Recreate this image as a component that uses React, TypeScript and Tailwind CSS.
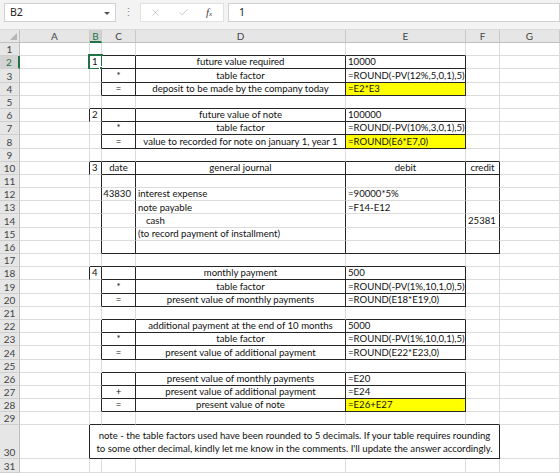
import { X, Check } from "lucide-react";

// column names: row header, A..G
const COLS = ["", "A", "B", "C", "D", "E", "F", "G"];

type Cell = { v: string; a?: "l" | "c" | "r"; y?: boolean; ind?: boolean };

const cells: Record<string, Cell> = {
  B2: { v: "1" },
  D2: { v: "future value required", a: "c" },
  E2: { v: "10000" },
  C3: { v: "*", a: "c" },
  D3: { v: "table factor", a: "c" },
  E3: { v: "=ROUND(-PV(12%,5,0,1),5)" },
  C4: { v: "=", a: "c" },
  D4: { v: "deposit to be made by the company today", a: "c" },
  E4: { v: "=E2*E3", y: true },

  B6: { v: "2" },
  D6: { v: "future value of note", a: "c" },
  E6: { v: "100000" },
  C7: { v: "*", a: "c" },
  D7: { v: "table factor", a: "c" },
  E7: { v: "=ROUND(-PV(10%,3,0,1),5)" },
  C8: { v: "=", a: "c" },
  D8: { v: "value to recorded for note on january 1, year 1", a: "c" },
  E8: { v: "=ROUND(E6*E7,0)", y: true },

  B10: { v: "3" },
  C10: { v: "date", a: "c" },
  D10: { v: "general journal", a: "c" },
  E10: { v: "debit", a: "c" },
  F10: { v: "credit", a: "c" },
  C12: { v: "43830", a: "r" },
  D12: { v: "interest expense" },
  E12: { v: "=90000*5%" },
  D13: { v: "note payable" },
  E13: { v: "=F14-E12" },
  D14: { v: "cash", ind: true },
  F14: { v: "25381" },
  D15: { v: "(to record payment of installment)" },

  B18: { v: "4" },
  D18: { v: "monthly payment", a: "c" },
  E18: { v: "500" },
  C19: { v: "*", a: "c" },
  D19: { v: "table factor", a: "c" },
  E19: { v: "=ROUND(-PV(1%,10,1,0),5)" },
  C20: { v: "=", a: "c" },
  D20: { v: "present value of monthly payments", a: "c" },
  E20: { v: "=ROUND(E18*E19,0)" },

  D22: { v: "additional payment at the end of 10 months", a: "c" },
  E22: { v: "5000" },
  C23: { v: "*", a: "c" },
  D23: { v: "table factor", a: "c" },
  E23: { v: "=ROUND(-PV(1%,10,0,1),5)" },
  C24: { v: "=", a: "c" },
  D24: { v: "present value of additional payment", a: "c" },
  E24: { v: "=ROUND(E22*E23,0)" },

  D26: { v: "present value of monthly payments", a: "c" },
  E26: { v: "=E20" },
  C27: { v: "+", a: "c" },
  D27: { v: "present value of additional payment", a: "c" },
  E27: { v: "=E24" },
  C28: { v: "=", a: "c" },
  D28: { v: "present value of note", a: "c" },
  E28: { v: "=E26+E27", y: true },
};

// black edges: H = bottom edge of cell, V = right edge of cell
const H = new Set<string>();
const V = new Set<string>();
const k = (c: number, r: number) => `${c},${r}`;

function allBorders(c1: number, r1: number, c2: number, r2: number) {
  for (let r = r1; r <= r2; r++)
    for (let c = c1; c <= c2; c++) {
      H.add(k(c, r));
      H.add(k(c, r1 - 1));
      V.add(k(c, r));
      V.add(k(c1 - 1, r));
    }
}
function outline(c1: number, r1: number, c2: number, r2: number) {
  for (let c = c1; c <= c2; c++) {
    H.add(k(c, r1 - 1));
    H.add(k(c, r2));
  }
  for (let r = r1; r <= r2; r++) {
    V.add(k(c1 - 1, r));
    V.add(k(c2, r));
  }
}
// the little numbered box in column B
function tab(r: number) {
  H.add(k(2, r - 1));
  V.add(k(1, r));
  V.add(k(2, r));
}

tab(2);
allBorders(3, 2, 5, 4);
tab(6);
allBorders(3, 6, 5, 8);
tab(10);
allBorders(3, 10, 6, 10);
for (let c = 3; c <= 6; c++) outline(c, 11, c, 16);
tab(18);
allBorders(3, 18, 5, 20);
allBorders(3, 22, 5, 24);
allBorders(3, 26, 5, 28);
outline(2, 30, 6, 30);

const font = "font-['Lato','Open_Sans',sans-serif]";

function FormulaBar() {
  return (
    <div className="flex h-[30px] items-start border-b border-[#dadada] bg-[#f3f3f3] pt-[3px] font-['Noto_Sans',sans-serif] text-[#222]">
      <div className="ml-[4px] flex h-[19px] w-[112px] items-center justify-between border border-[#d0d0d0] bg-white pr-[5px] pl-[5px] text-[10.5px]">
        <span>B2</span>
        <span className="mt-[1px] h-0 w-0 border-x-[3px] border-t-[3px] border-x-transparent border-t-[#555]" />
      </div>
      <div className="flex h-[19px] w-[24px] items-center justify-center text-[11px] text-[#888]">⋮</div>
      <div className="flex h-[19px] w-[84px] items-center border border-[#e0e0e0] bg-white">
        <X className="ml-[9px] h-[11px] w-[11px] text-[#a6a6a6]" strokeWidth={1.3} />
        <Check className="ml-[17px] h-[11px] w-[11px] text-[#a6a6a6]" strokeWidth={1.3} />
        <span className="ml-[17px] font-['Liberation_Serif',serif] text-[11px] text-[#444] italic">
          f<span className="text-[7px]">x</span>
        </span>
      </div>
      <div className="ml-[4px] flex h-[19px] flex-1 items-center border border-[#d0d0d0] bg-white pl-[10px] text-[10.5px]">
        1
      </div>
    </div>
  );
}

export default function App() {
  const out: React.ReactNode[] = [];

  // column header row
  COLS.forEach((name, c) => {
    if (c === 0) {
      out.push(
        <div key="corner" className="relative border-r border-b border-[#c0c0c0] bg-[#e6e6e6]">
          <span className="absolute right-[2px] bottom-[2px] h-0 w-0 border-b-[7px] border-l-[7px] border-l-transparent border-b-[#b5b5b5]" />
        </div>,
      );
      return;
    }
    const sel = name === "B";
    out.push(
      <div
        key={`h${c}`}
        className={
          sel
            ? "flex items-center justify-center border-r border-r-[#c8c8c8] border-b-2 border-b-[#217346] bg-[#d3d3d3] text-[10px] text-[#217346]"
            : "flex items-center justify-center border-r border-r-[#c8c8c8] border-b border-b-[#c0c0c0] bg-[#e6e6e6] text-[10px] text-[#444]"
        }
      >
        {name}
      </div>,
    );
  });

  for (let r = 1; r <= 31; r++) {
    const selRow = r === 2;
    out.push(
      <div
        key={`r${r}`}
        className={
          selRow
            ? "flex items-end justify-center border-r-2 border-r-[#217346] border-b border-b-[#cfcfcf] bg-[#d3d3d3] text-[10px] leading-[12px] text-[#217346]"
            : "flex items-end justify-center border-r border-r-[#bdbdbd] border-b border-b-[#cfcfcf] bg-[#e6e6e6] text-[10px] leading-[12px] text-[#444]"
        }
      >
        {r}
      </div>,
    );

    for (let c = 1; c <= 7; c++) {
      if (r === 30 && c >= 3 && c <= 6) continue;
      const merged = r === 30 && c === 2;
      const right = merged ? V.has(k(6, 30)) : V.has(k(c, r));
      const bottom = H.has(k(c, r));
      const id = `${COLS[c]}${r}`;
      const cell = cells[id];
      const align =
        cell?.a === "c" ? "justify-center" : cell?.a === "r" ? "justify-end pr-[4px]" : "justify-start pl-[2px]";

      out.push(
        <div
          key={id}
          className={[
            "relative flex items-center overflow-visible border-r border-b whitespace-nowrap",
            right ? "border-r-[#262626]" : "border-r-[#dcdcdc]",
            bottom ? "border-b-[#262626]" : "border-b-[#dcdcdc]",
            cell?.y ? "bg-[#ffff00]" : "bg-white",
            merged ? "col-span-5 justify-center" : align,
          ].join(" ")}
        >
          {merged ? (
            <div className="text-center leading-[13px]">
              note - the table factors used have been rounded to 5 decimals. If your table requires rounding
              <br />
              to some other decimal, kindly let me know in the comments. I'll update the answer accordingly.
            </div>
          ) : (
            cell && <span className={cell.ind ? "pl-[8px]" : ""}>{cell.v}</span>
          )}
          {id === "B2" && (
            <>
              <span className="pointer-events-none absolute -top-[2px] -left-[2px] h-[16px] w-[15px] border-2 border-[#217346]" />
              <span className="pointer-events-none absolute -right-[3px] -bottom-[3px] h-[5px] w-[5px] border border-white bg-[#217346]" />
            </>
          )}
        </div>,
      );
    }
  }

  return (
    <div className={`h-[473px] w-[560px] overflow-hidden bg-white ${font} text-[#111]`}>
      <FormulaBar />
      <div className="grid grid-cols-[20px_70px_12px_34px_210px_120px_34px_60px] grid-rows-[13px_repeat(29,13.2px)_34px_14px] text-[9.6px] leading-none">
        {out}
      </div>
    </div>
  );
}
